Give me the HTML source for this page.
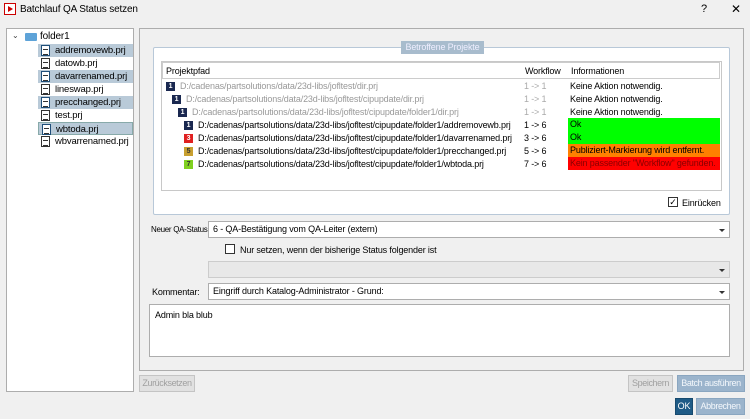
<!DOCTYPE html>
<html><head><meta charset="utf-8"><style>
*{box-sizing:border-box;margin:0;padding:0}
body{width:750px;height:419px;background:#f0f0f0;font-family:"Liberation Sans",sans-serif;font-size:9px;color:#000;position:relative;overflow:hidden;letter-spacing:-0.15px}
.a{position:absolute}
.t{white-space:nowrap}
.box{position:absolute;border:1px solid #adadad;background:#fff}
.file{position:absolute;left:38px;height:13px;width:95px;line-height:13px;padding-left:17px;font-size:9.5px}
.file.sel{background:#b9cad8;width:95px}
.fi{position:absolute;left:3px;top:1px;width:9px;height:11px;border:1px solid #333;background:#fff}
.fi:after{content:"";position:absolute;left:1px;top:3px;width:5px;height:4px;border-top:1px solid #333;border-bottom:1px solid #333}
.sel .fi{border-color:#1f4e79}
.row{position:absolute;left:163px;width:557px;height:13px;line-height:13px}
.ic{position:absolute;top:2px;width:9px;height:9px;font-size:7px;line-height:9px;text-align:center;color:#fff;font-weight:bold}
.btn{position:absolute;height:17px;border:1px solid #c4c4c4;background:#e1e1e1;color:#a0a0a0;text-align:center;line-height:15px}
.combo{position:absolute;left:208px;width:522px;height:17px;border:1px solid #adadad;background:#fff;line-height:15px;padding-left:4px}
.combo:after{content:"";position:absolute;right:4px;top:7px;border-left:3px solid transparent;border-right:3px solid transparent;border-top:3px solid #333}
</style></head><body>
<div class="a" style="left:4px;top:3px;width:12px;height:12px;border:1px solid #c00;background:#fff"><div class="a" style="left:3px;top:2px;border-top:3px solid transparent;border-bottom:3px solid transparent;border-left:5px solid #c00"></div></div>
<div class="a t" style="left:20px;top:4px;font-size:10px">Batchlauf QA Status setzen</div>
<div class="a t" style="left:701px;top:3px;font-size:11px">?</div>
<div class="a t" style="left:731px;top:2px;font-size:12px">✕</div>

<div class="box" style="left:6px;top:28px;width:128px;height:364px"></div>
<div class="a t" style="left:12px;top:31px;font-size:8px;color:#444">⌄</div>
<div class="a" style="left:25px;top:33px;width:12px;height:8px;background:#5ea3d8;border-radius:1px"></div>
<div class="a t" style="left:40px;top:31px;font-size:10px">folder1</div>
<div class="file sel" style="top:44px"><span class="fi"></span>addremovewb.prj</div>
<div class="file" style="top:57px"><span class="fi"></span>datowb.prj</div>
<div class="file sel" style="top:70px"><span class="fi"></span>davarrenamed.prj</div>
<div class="file" style="top:83px"><span class="fi"></span>lineswap.prj</div>
<div class="file sel" style="top:96px"><span class="fi"></span>precchanged.prj</div>
<div class="file" style="top:109px"><span class="fi"></span>test.prj</div>
<div class="file sel" style="top:122px;border:1px solid #8aa"><span class="fi"></span>wbtoda.prj</div>
<div class="file" style="top:135px"><span class="fi"></span>wbvarrenamed.prj</div>

<div class="a" style="left:139px;top:28px;width:605px;height:343px;border:1px solid #adadad;background:#f0f0f0"></div>
<div class="a" style="left:153px;top:47px;width:577px;height:168px;border:1px solid #b8c8d8;border-radius:2px;background:#fff"></div>
<div class="a t" style="left:401px;top:41px;width:83px;height:13px;background:#a8bccd;color:#eef;text-align:center;line-height:13px">Betroffene Projekte</div>
<div class="box" style="left:161px;top:61px;width:561px;height:130px;border-color:#c8c8c8"></div>
<div class="a" style="left:162px;top:62px;width:558px;height:17px;border:1px solid #ccc;background:#fff"></div>
<div class="a t" style="left:166px;top:66px">Projektpfad</div>
<div class="a t" style="left:525px;top:66px">Workflow</div>
<div class="a t" style="left:571px;top:66px">Informationen</div>

<div class="row" style="top:80px;color:#999"><span class="ic" style="left:3px;background:#1a2850">1</span><span class="a t" style="left:17px">D:/cadenas/partsolutions/data/23d-libs/jofltest/dir.prj</span></div>
<div class="row" style="top:93px;color:#999"><span class="ic" style="left:9px;background:#1a2850">1</span><span class="a t" style="left:23px">D:/cadenas/partsolutions/data/23d-libs/jofltest/cipupdate/dir.prj</span></div>
<div class="row" style="top:106px;color:#999"><span class="ic" style="left:15px;background:#1a2850">1</span><span class="a t" style="left:29px">D:/cadenas/partsolutions/data/23d-libs/jofltest/cipupdate/folder1/dir.prj</span></div>
<div class="row" style="top:119px"><span class="ic" style="left:21px;background:#1a2850">1</span><span class="a t" style="left:35px">D:/cadenas/partsolutions/data/23d-libs/jofltest/cipupdate/folder1/addremovewb.prj</span></div>
<div class="row" style="top:132px"><span class="ic" style="left:21px;background:#e02020">3</span><span class="a t" style="left:35px">D:/cadenas/partsolutions/data/23d-libs/jofltest/cipupdate/folder1/davarrenamed.prj</span></div>
<div class="row" style="top:145px"><span class="ic" style="left:21px;background:#c8a030;color:#333">5</span><span class="a t" style="left:35px">D:/cadenas/partsolutions/data/23d-libs/jofltest/cipupdate/folder1/precchanged.prj</span></div>
<div class="row" style="top:158px"><span class="ic" style="left:21px;background:#80d020;color:#333">7</span><span class="a t" style="left:35px">D:/cadenas/partsolutions/data/23d-libs/jofltest/cipupdate/folder1/wbtoda.prj</span></div>

<div class="a t" style="left:524px;top:80px;color:#aaa;line-height:13px">1 -&gt; 1<br>1 -&gt; 1<br>1 -&gt; 1</div>
<div class="a t" style="left:524px;top:119px;line-height:13px">1 -&gt; 6<br>3 -&gt; 6<br>5 -&gt; 6<br>7 -&gt; 6</div>
<div class="a t" style="left:570px;top:80px;line-height:13px">Keine Aktion notwendig.<br>Keine Aktion notwendig.<br>Keine Aktion notwendig.</div>
<div class="a t" style="left:568px;top:118px;width:152px;height:26px;background:#00ff00;padding-left:2px;line-height:13px">Ok<br>Ok</div>
<div class="a t" style="left:568px;top:144px;width:152px;height:13px;background:#ff8000;padding-left:2px;line-height:13px">Publiziert-Markierung wird entfernt.</div>
<div class="a t" style="left:568px;top:157px;width:152px;height:13px;background:#ff0000;color:#800;padding-left:2px;line-height:13px;overflow:hidden">Kein passender "Workflow" gefunden.</div>

<div class="a" style="left:668px;top:197px;width:10px;height:10px;border:1px solid #333;background:#fff;font-size:9px;line-height:8px;text-align:center">✓</div>
<div class="a t" style="left:682px;top:198px">Einrücken</div>

<div class="a t" style="left:151px;top:225px;font-size:8px;letter-spacing:-0.3px">Neuer QA-Status:</div>
<div class="combo" style="top:221px">6 - QA-Bestätigung vom QA-Leiter (extern)</div>
<div class="a" style="left:225px;top:244px;width:10px;height:10px;border:1px solid #333;background:#fff"></div>
<div class="a t" style="left:240px;top:245px">Nur setzen, wenn der bisherige Status folgender ist</div>
<div class="combo" style="top:261px;background:#e8e8e8;border-color:#ccc"></div>
<div class="a t" style="left:152px;top:287px">Kommentar:</div>
<div class="combo" style="top:283px">Eingriff durch Katalog-Administrator - Grund:</div>
<div class="box" style="left:149px;top:304px;width:581px;height:53px;padding:5px 5px;line-height:11px">Admin bla blub</div>

<div class="btn t" style="left:139px;top:375px;width:56px;letter-spacing:-0.4px">Zurücksetzen</div>
<div class="btn t" style="left:628px;top:375px;width:45px;letter-spacing:-0.4px">Speichern</div>
<div class="btn t" style="left:677px;top:375px;width:68px;background:#9bb4cc;border-color:#8aa6c0;color:#f4f8fc;letter-spacing:-0.4px">Batch ausführen</div>
<div class="btn t" style="left:675px;top:398px;width:18px;background:#1f5b86;border-color:#174a6e;color:#fff">OK</div>
<div class="btn t" style="left:696px;top:398px;width:49px;background:#9bb4cc;border-color:#8aa6c0;color:#f4f8fc;letter-spacing:-0.4px">Abbrechen</div>
</body></html>
